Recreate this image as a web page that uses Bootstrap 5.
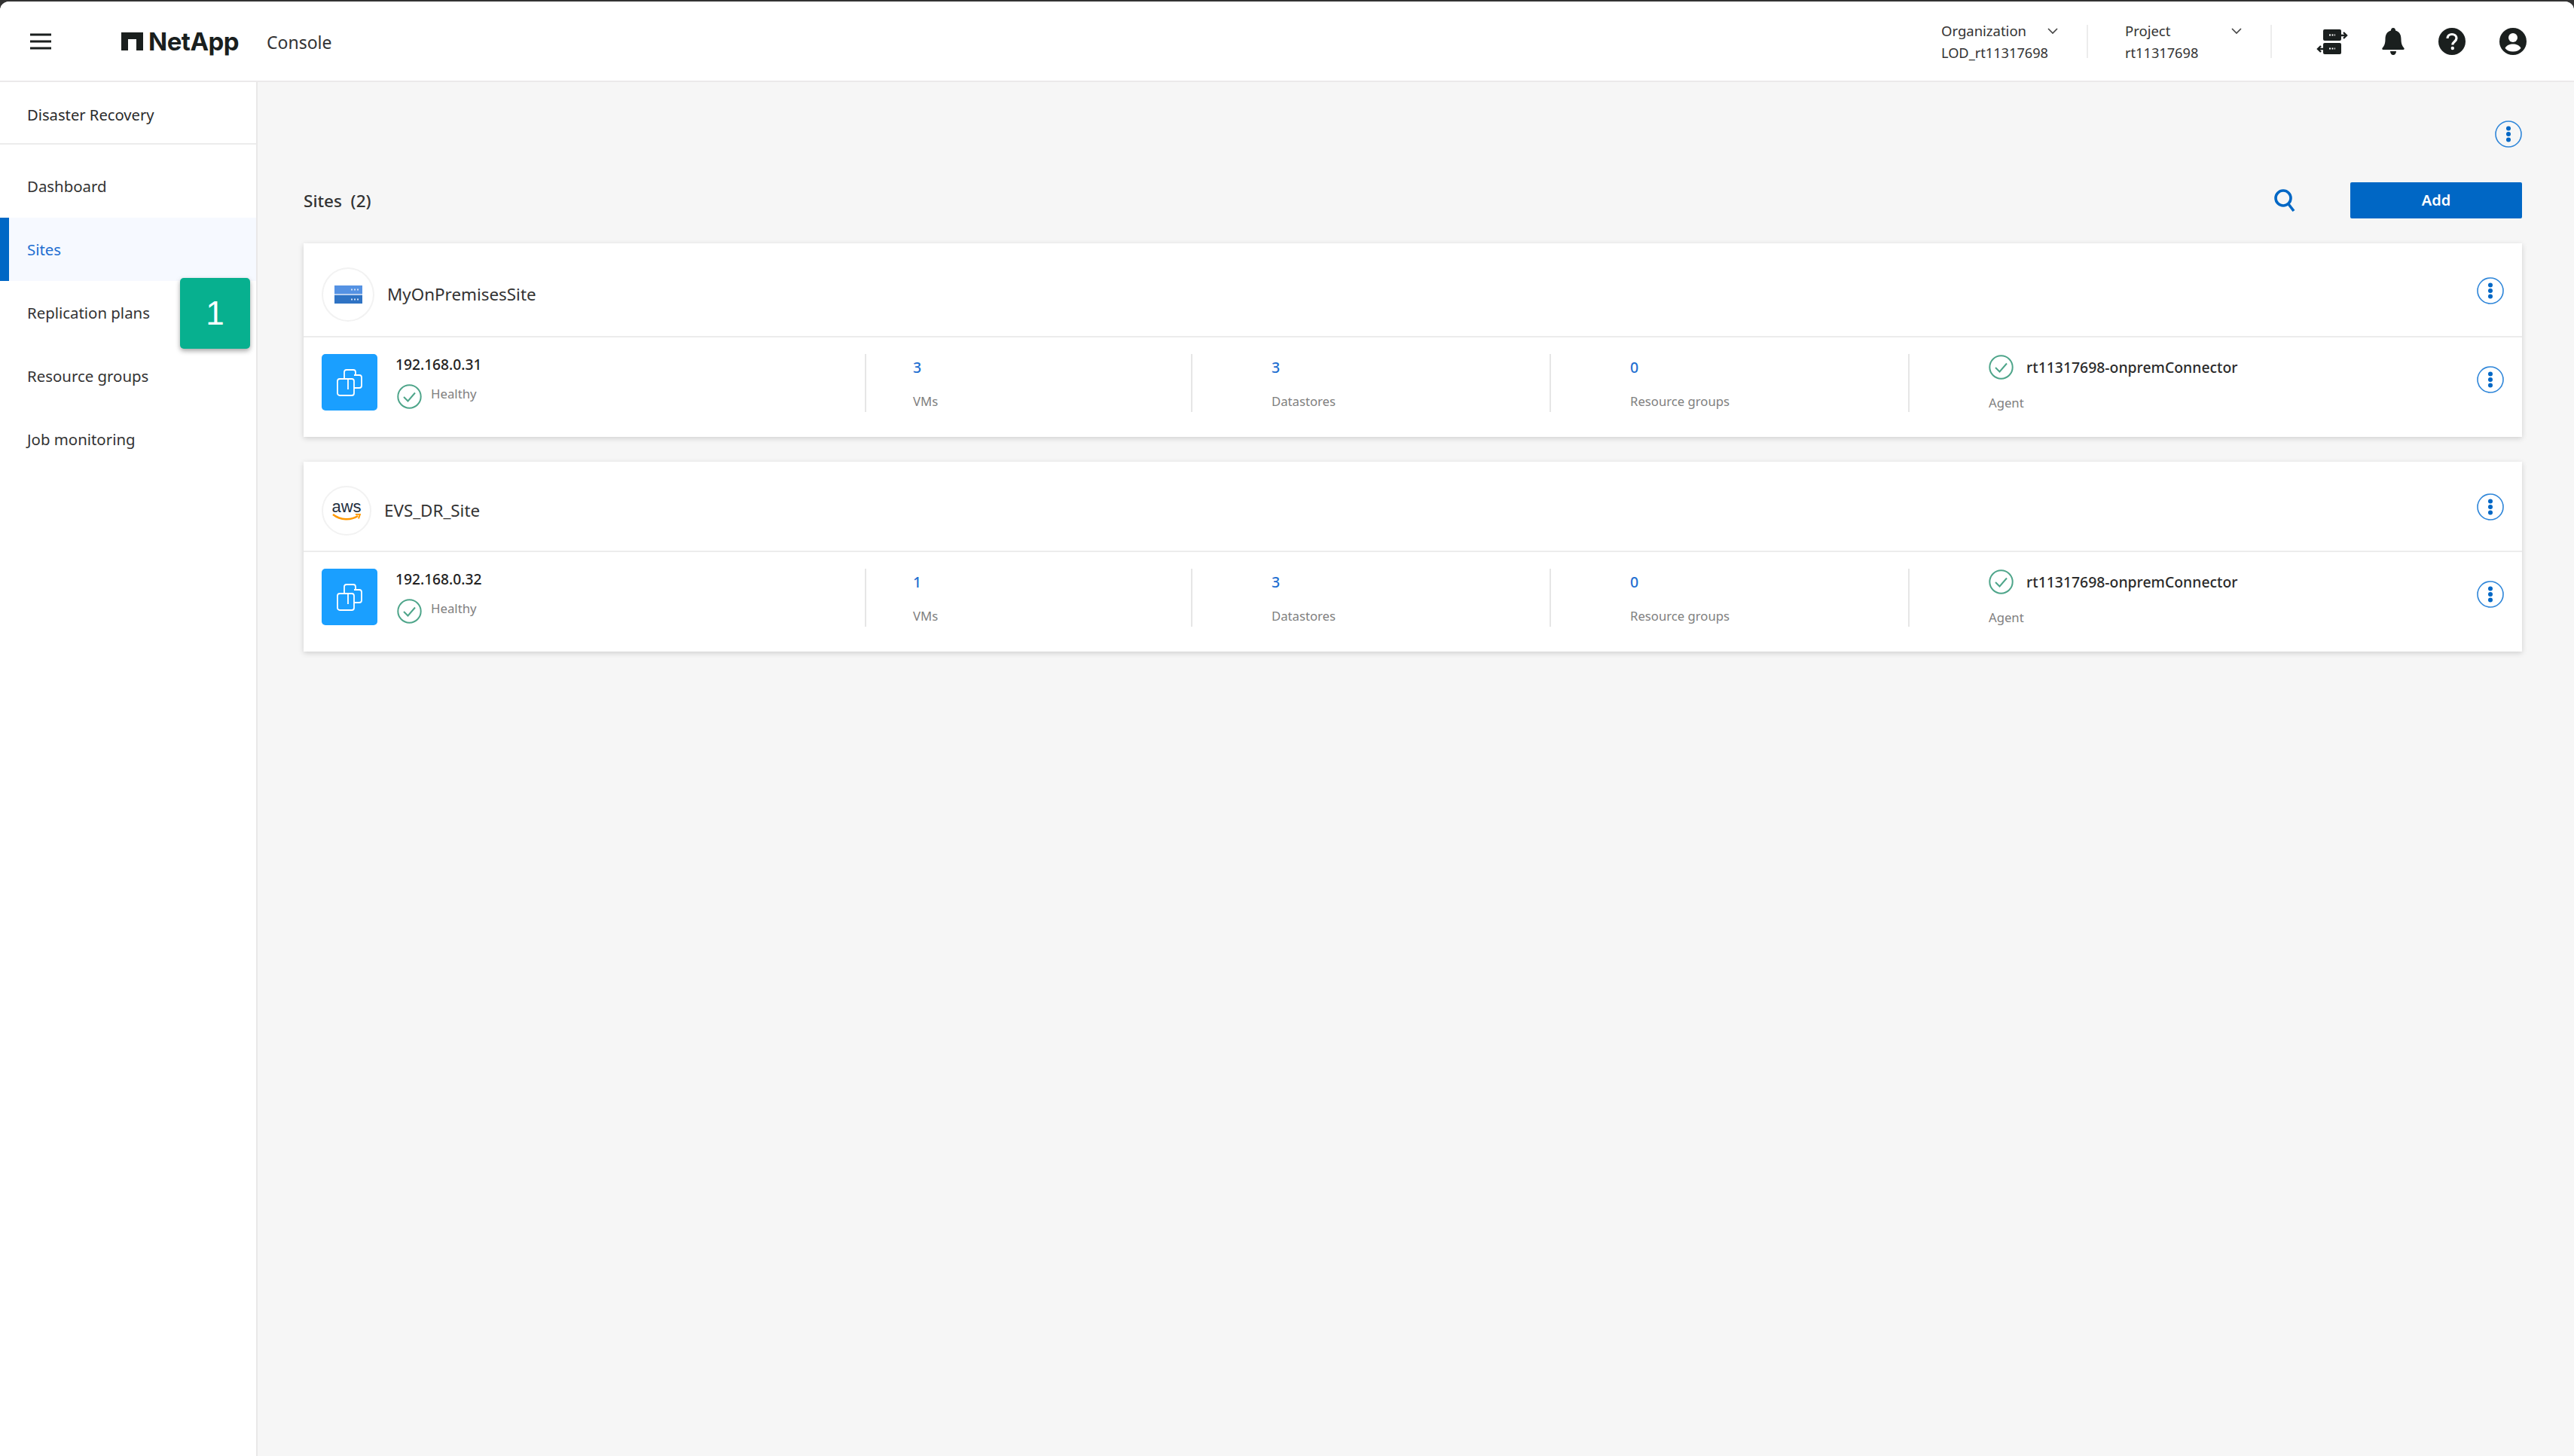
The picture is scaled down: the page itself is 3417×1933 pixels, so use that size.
<!DOCTYPE html>
<html lang="en">
<head>
<meta charset="utf-8">
<title>Sites</title>
<link href="https://cdn.jsdelivr.net/npm/bootstrap@5.3.0/dist/css/bootstrap.min.css" rel="stylesheet">
<style>
html,body{height:100%;background:#333;}
body{font-family:"Noto Sans","Open Sans",sans-serif;color:#2b2b2b;font-size:20px;overflow:hidden;}
.frame{height:1931px;margin-top:2px;border-radius:12px 12px 0 0;overflow:hidden;background:#fff;display:flex;flex-direction:column;}
.topbar{height:107px;flex:none;background:#fff;border-bottom:2px solid #ebe9ea;}
.burger{margin-left:40px;width:28px;}
.brand{margin-left:93px;width:160px;height:40px;gap:7px;}
.brand-name{font-family:"Inter","Liberation Sans",sans-serif;font-weight:700;font-size:33px;letter-spacing:-.5px;color:#1a1f1e;line-height:40px;}
.product{margin-left:33px;margin-top:3px;font-size:23px;color:#333;}
.scope{height:44px;width:195px;border-right:2px solid #ececec;margin-right:49px;flex:none;}
.scope-top{font-size:18.5px;line-height:26px;color:#333;margin-top:-5px;}
.scope-sub{font-size:18.2px;line-height:26px;margin-top:3px;color:#333;}
.scope-chev{width:16px;height:10px;margin-left:auto;margin-right:37px;margin-top:-5px;}
.scope-last{margin-right:59px;}
.tools{gap:45px;margin-right:63px;}
.shell{flex:1;min-height:0;}
.sidenav{width:342px;flex:none;background:#fff;border-right:2px solid #e9e8e8;position:relative;}
.nav-title{height:83px;display:flex;align-items:center;padding:5px 0 0 36px;border-bottom:2px solid #ececec;font-size:20.2px;margin-bottom:13px;}
.nav-entry{height:84px;display:flex;align-items:center;padding-left:36px;font-size:20.4px;color:#333;text-decoration:none;}
.nav-on{background:#f6f9ff;color:#1f6fd1;border-left:12px solid #0067c5;padding-left:24px;}
.step-tag{position:absolute;left:239px;top:260px;width:93px;height:94px;background:#07b08f;border-radius:5px;color:#fff;font-family:"Liberation Sans",sans-serif;font-size:44px;display:flex;align-items:center;justify-content:center;box-shadow:0 3px 6px rgba(0,0,0,.35);}
.work{flex:1;min-width:0;background:#f6f6f6;padding:51px 69px 0 61px;}
.top-kebab{height:36px;margin-bottom:46px;}
.title-row{height:48px;margin-bottom:33px;}
.title-text{font-size:22.5px;font-weight:500;color:#333;margin-top:2px;}
.add-btn{width:228px;height:48px;background:#0067c5;border:0;border-radius:2px;color:#fff;font-size:20px;font-weight:600;margin-left:73px;}
.site{background:#fff;box-shadow:0 2px 7px rgba(0,0,0,.16);margin-bottom:33px;}
.site-head{height:125px;border-bottom:2px solid #ececec;padding:0 24px;}
.site-head-b{height:120px;}
.logo-disc{width:70px;height:72px;border:2px solid #f2f2f2;border-radius:50%;flex:none;display:flex;flex-direction:column;align-items:center;justify-content:center;margin-top:12px;}
.logo-disc-b{width:66px;height:66px;}
.site-name{margin-left:17px;font-size:22.4px;color:#333;margin-top:12px;}
.site-kebab{margin-left:auto;margin-top:2px;}
.aws-word{font-family:"Liberation Sans",sans-serif;font-size:22px;line-height:18px;color:#232f3e;}
.site-body{height:132px;padding:22px 24px 0;}
.host-col{width:721px;flex:none;}
.host-square{width:74px;height:75px;background:#1a9fff;border-radius:5px;flex:none;display:flex;align-items:center;justify-content:center;}
.host-text{margin-left:24px;}
.host-ip{font-size:19.2px;line-height:28px;font-weight:500;color:#222;}
.health{margin-top:12px;padding-left:2px;}
.health-label{margin-left:12px;font-size:16.8px;color:#808080;line-height:26px;margin-top:-8px;}
.stat{height:77px;border-left:2px solid #e6e6e6;padding:4px 0 0 105px;display:flex;flex-direction:column;justify-content:space-between;flex:none;width:476px;}
.stat-first{width:433px;padding-left:62px;}
.stat-agent{width:auto;flex:1;}
.stat-num{font-size:19.5px;line-height:28px;color:#1f6fd1;font-weight:500;}
.stat-label{font-size:16.7px;line-height:28px;color:#808080;}
.agent-name{margin-left:17px;font-size:19.4px;font-weight:500;color:#2b2b2b;line-height:28px;}
.agent-line{height:33px;margin-top:-3px;}
.agent-tag{transform:translateY(2px);}
.row-kebab{margin-left:auto;margin-top:16px;flex:none;}
</style>
</head>
<body>
<div class="frame">
  <header class="topbar d-flex align-items-center">
    <svg class="burger" height="22" viewBox="0 0 28 22"><path d="M0 2h28M0 11h28M0 20h28" stroke="#1a1f1e" stroke-width="3"/></svg>
    <div class="brand d-flex align-items-center">
      <svg width="29" height="24" viewBox="0 0 29 24"><path d="M0 0h29v24h-9V9H9v15H0z" fill="#1a1f1e"/></svg>
      <span class="brand-name">NetApp</span>
    </div>
    <div class="product">Console</div>
    <div class="d-flex align-items-center ms-auto">
      <div class="scope">
        <div class="d-flex align-items-center"><span class="scope-top">Organization</span>
          <svg class="scope-chev" viewBox="0 0 16 10"><path d="M2 2l6 6 6-6" fill="none" stroke="#444" stroke-width="1.600"/></svg></div>
        <div class="scope-sub">LOD_rt11317698</div>
      </div>
      <div class="scope scope-last">
        <div class="d-flex align-items-center"><span class="scope-top">Project</span>
          <svg class="scope-chev" viewBox="0 0 16 10"><path d="M2 2l6 6 6-6" fill="none" stroke="#444" stroke-width="1.600"/></svg></div>
        <div class="scope-sub">rt11317698</div>
      </div>
      <div class="tools d-flex align-items-center">
        <svg width="42" height="36" viewBox="0 0 42 36">
          <rect x="9" y="2" width="24" height="15" rx="2" fill="#1a1f1e"/><rect x="9" y="20" width="24" height="15" rx="2" fill="#1a1f1e"/>
          <path d="M33 10h6M36 6l4 4-4 4M9 28H3M6 24l-4 4 4 4" fill="none" stroke="#1a1f1e" stroke-width="2.400"/>
          <path d="M17 9.500h8M17 27.500h8" stroke="#fff" stroke-width="2" stroke-dasharray="2 1.500"/>
        </svg>
        <svg width="30" height="36" viewBox="0 0 30 36"><path d="M15 0c2 0 3 1.500 3 3.500C23.500 5 25.500 9.500 25.500 15c0 6 1.500 9 4 12 .6 1 0 2-1 2H1.500c-1 0-1.600-1-1-2 2.500-3 4-6 4-12 0-5.500 2-10 7.500-11.500C12 1.500 13 0 15 0zM11 31h8c0 3-2 5-4 5s-4-2-4-5z" fill="#1a1f1e"/></svg>
        <svg width="36" height="36" viewBox="0 0 36 36"><circle cx="18" cy="18" r="18" fill="#1a1f1e"/><path d="M12 14c0-3.500 2.700-5.500 6-5.500s6 2 6 5.200c0 4.500-5.200 4.500-5.200 8.800" fill="none" stroke="#fff" stroke-width="3.200"/><circle cx="18.800" cy="27" r="2.200" fill="#fff"/></svg>
        <svg width="36" height="36" viewBox="0 0 36 36"><circle cx="18" cy="18" r="18" fill="#1a1f1e"/><circle cx="18" cy="13" r="6" fill="#fff"/><path d="M7.500 27c2-4 6-5.500 10.500-5.500S26.500 23 28.500 27c-2.500 3-6 4.500-10.500 4.500S10 30 7.500 27z" fill="#fff"/></svg>
      </div>
    </div>
  </header>
  <div class="shell d-flex">
    <nav class="sidenav">
      <div class="nav-title">Disaster Recovery</div>
      <a class="nav-entry" href="#">Dashboard</a>
      <a class="nav-entry nav-on" href="#">Sites</a>
      <a class="nav-entry" href="#">Replication plans</a>
      <a class="nav-entry" href="#">Resource groups</a>
      <a class="nav-entry" href="#">Job monitoring</a>
      <div class="step-tag">1</div>
    </nav>
    <main class="work">
      <div class="top-kebab d-flex justify-content-end">
        <svg width="36" height="36" viewBox="0 0 36 36"><circle cx="18" cy="18" r="17" fill="none" stroke="#2f86d9" stroke-width="1.600"/><circle cx="18" cy="10.500" r="3" fill="#0067c5"/><circle cx="18" cy="18" r="3" fill="#0067c5"/><circle cx="18" cy="25.500" r="3" fill="#0067c5"/></svg>
      </div>
      <div class="title-row d-flex align-items-center">
        <div class="title-text">Sites&nbsp; (2)</div>
        <svg class="ms-auto" width="28" height="30" viewBox="0 0 28 30"><circle cx="12" cy="12" r="10" fill="none" stroke="#0067c5" stroke-width="3.600"/><path d="M19 20l7 9" stroke="#0067c5" stroke-width="3.600"/></svg>
        <button class="add-btn" type="button">Add</button>
      </div>

      <section class="site">
        <div class="site-head d-flex align-items-center">
          <div class="logo-disc">
            <svg width="37" height="24" viewBox="0 0 37 24"><rect width="37" height="11" fill="#5592e3"/><rect y="11" width="37" height="2" fill="#b9d0ef"/><rect y="13" width="37" height="11" fill="#2f73c4"/><path d="M22 5.500h12M22 18.500h12" stroke="#cfe0f6" stroke-width="2" stroke-dasharray="2 2"/></svg>
          </div>
          <div class="site-name">MyOnPremisesSite</div>
          <svg class="site-kebab" width="36" height="36" viewBox="0 0 36 36"><circle cx="18" cy="18" r="17" fill="none" stroke="#2f86d9" stroke-width="1.600"/><circle cx="18" cy="10.500" r="3" fill="#0067c5"/><circle cx="18" cy="18" r="3" fill="#0067c5"/><circle cx="18" cy="25.500" r="3" fill="#0067c5"/></svg>
        </div>
        <div class="site-body d-flex align-items-start">
          <div class="host-col d-flex">
            <div class="host-square"><svg width="34" height="36" viewBox="0 0 34 36"><g fill="none" stroke="#fff" stroke-width="1.800"><rect x="1" y="13" width="22" height="22" rx="3"/><path d="M10 13V4a3 3 0 0 1 3-3h9a3 3 0 0 1 3 3v3"/><path d="M23 8h7a3 3 0 0 1 3 3v11a3 3 0 0 1-3 3h-7M15 13v14"/></g></svg></div>
            <div class="host-text">
              <div class="host-ip">192.168.0.31</div>
              <div class="health d-flex align-items-center">
                <svg width="33" height="33" viewBox="0 0 33 33"><circle cx="16.500" cy="16.500" r="15.200" fill="none" stroke="#4ea58a" stroke-width="2"/><path d="M9 17l5.500 5.500L24 11.500" fill="none" stroke="#4ea58a" stroke-width="2"/></svg>
                <span class="health-label">Healthy</span>
              </div>
            </div>
          </div>
          <div class="stat stat-first"><div class="stat-num">3</div><div class="stat-label">VMs</div></div>
          <div class="stat"><div class="stat-num">3</div><div class="stat-label">Datastores</div></div>
          <div class="stat"><div class="stat-num">0</div><div class="stat-label">Resource groups</div></div>
          <div class="stat stat-agent">
            <div class="agent-line d-flex align-items-center">
              <svg width="33" height="33" viewBox="0 0 33 33"><circle cx="16.500" cy="16.500" r="15.200" fill="none" stroke="#4ea58a" stroke-width="2"/><path d="M9 17l5.500 5.500L24 11.500" fill="none" stroke="#4ea58a" stroke-width="2"/></svg>
              <span class="agent-name">rt11317698-onpremConnector</span>
            </div>
            <div class="stat-label agent-tag">Agent</div>
          </div>
          <svg class="row-kebab" width="36" height="36" viewBox="0 0 36 36"><circle cx="18" cy="18" r="17" fill="none" stroke="#2f86d9" stroke-width="1.600"/><circle cx="18" cy="10.500" r="3" fill="#0067c5"/><circle cx="18" cy="18" r="3" fill="#0067c5"/><circle cx="18" cy="25.500" r="3" fill="#0067c5"/></svg>
        </div>
      </section>

      <section class="site">
        <div class="site-head site-head-b d-flex align-items-center">
          <div class="logo-disc logo-disc-b">
            <span class="aws-word">aws</span>
            <svg width="38" height="10" viewBox="0 0 38 10"><path d="M1 1c10 8 24 8 33 2" fill="none" stroke="#f90" stroke-width="2.400"/><path d="M31 1l6-.5-2 6" fill="none" stroke="#f90" stroke-width="2"/></svg>
          </div>
          <div class="site-name">EVS_DR_Site</div>
          <svg class="site-kebab" width="36" height="36" viewBox="0 0 36 36"><circle cx="18" cy="18" r="17" fill="none" stroke="#2f86d9" stroke-width="1.600"/><circle cx="18" cy="10.500" r="3" fill="#0067c5"/><circle cx="18" cy="18" r="3" fill="#0067c5"/><circle cx="18" cy="25.500" r="3" fill="#0067c5"/></svg>
        </div>
        <div class="site-body d-flex align-items-start">
          <div class="host-col d-flex">
            <div class="host-square"><svg width="34" height="36" viewBox="0 0 34 36"><g fill="none" stroke="#fff" stroke-width="1.800"><rect x="1" y="13" width="22" height="22" rx="3"/><path d="M10 13V4a3 3 0 0 1 3-3h9a3 3 0 0 1 3 3v3"/><path d="M23 8h7a3 3 0 0 1 3 3v11a3 3 0 0 1-3 3h-7M15 13v14"/></g></svg></div>
            <div class="host-text">
              <div class="host-ip">192.168.0.32</div>
              <div class="health d-flex align-items-center">
                <svg width="33" height="33" viewBox="0 0 33 33"><circle cx="16.500" cy="16.500" r="15.200" fill="none" stroke="#4ea58a" stroke-width="2"/><path d="M9 17l5.500 5.500L24 11.500" fill="none" stroke="#4ea58a" stroke-width="2"/></svg>
                <span class="health-label">Healthy</span>
              </div>
            </div>
          </div>
          <div class="stat stat-first"><div class="stat-num">1</div><div class="stat-label">VMs</div></div>
          <div class="stat"><div class="stat-num">3</div><div class="stat-label">Datastores</div></div>
          <div class="stat"><div class="stat-num">0</div><div class="stat-label">Resource groups</div></div>
          <div class="stat stat-agent">
            <div class="agent-line d-flex align-items-center">
              <svg width="33" height="33" viewBox="0 0 33 33"><circle cx="16.500" cy="16.500" r="15.200" fill="none" stroke="#4ea58a" stroke-width="2"/><path d="M9 17l5.500 5.500L24 11.500" fill="none" stroke="#4ea58a" stroke-width="2"/></svg>
              <span class="agent-name">rt11317698-onpremConnector</span>
            </div>
            <div class="stat-label agent-tag">Agent</div>
          </div>
          <svg class="row-kebab" width="36" height="36" viewBox="0 0 36 36"><circle cx="18" cy="18" r="17" fill="none" stroke="#2f86d9" stroke-width="1.600"/><circle cx="18" cy="10.500" r="3" fill="#0067c5"/><circle cx="18" cy="18" r="3" fill="#0067c5"/><circle cx="18" cy="25.500" r="3" fill="#0067c5"/></svg>
        </div>
      </section>
    </main>
  </div>
</div>
<script src="https://cdn.jsdelivr.net/npm/bootstrap@5.3.0/dist/js/bootstrap.bundle.min.js"></script>
</body>
</html>
